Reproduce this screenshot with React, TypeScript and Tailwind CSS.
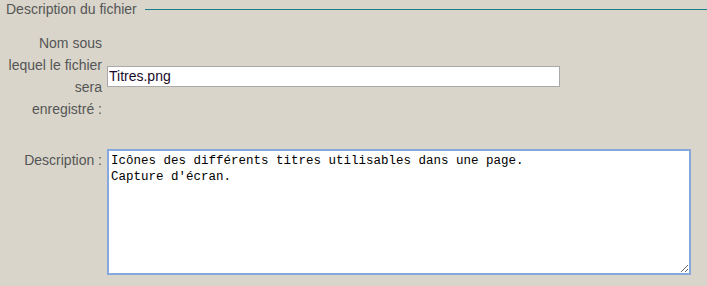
import React from 'react';

const App = () => {
  return (
    <div className="w-[707px] h-[286px] overflow-hidden bg-[#d9d5cb] font-['Liberation_Sans',Arial,sans-serif] text-[14px] text-[#555]">
      {/* Fieldset legend */}
      <div className="flex items-center pl-[6px] h-[19px]">
        <span className="leading-[19px] pr-[8px]">Description du fichier</span>
        <div className="flex-1 border-t border-[#1b7d88]" />
      </div>

      {/* Nom du fichier */}
      <div className="flex items-center mt-[13px]">
        <label className="w-[102px] text-right leading-[22px] shrink-0">
          Nom sous
          <br />
          lequel le fichier
          <br />
          sera
          <br />
          enregistré :
        </label>
        <input
          type="text"
          defaultValue="Titres.png"
          className="ml-[5px] w-[453px] h-[21px] bg-white border border-[#a9a9a9] px-[1px] text-[14px] text-[#1a0a2a] outline-none font-['Liberation_Sans',Arial,sans-serif]"
        />
      </div>

      {/* Description */}
      <div className="flex items-start mt-[29px]">
        <label className="w-[102px] text-right leading-[22px] shrink-0">
          Description :
        </label>
        <textarea
          defaultValue={"Icônes des différents titres utilisables dans une page.\nCapture d'écran."}
          className="ml-[5px] w-[584px] h-[126px] bg-white border-2 border-[#87a8dc] px-[2px] py-[2px] text-[12.5px] leading-[16px] text-black outline-none resize font-['Liberation_Mono','Courier_New',monospace]"
        />
      </div>
    </div>
  );
};

export default App;
